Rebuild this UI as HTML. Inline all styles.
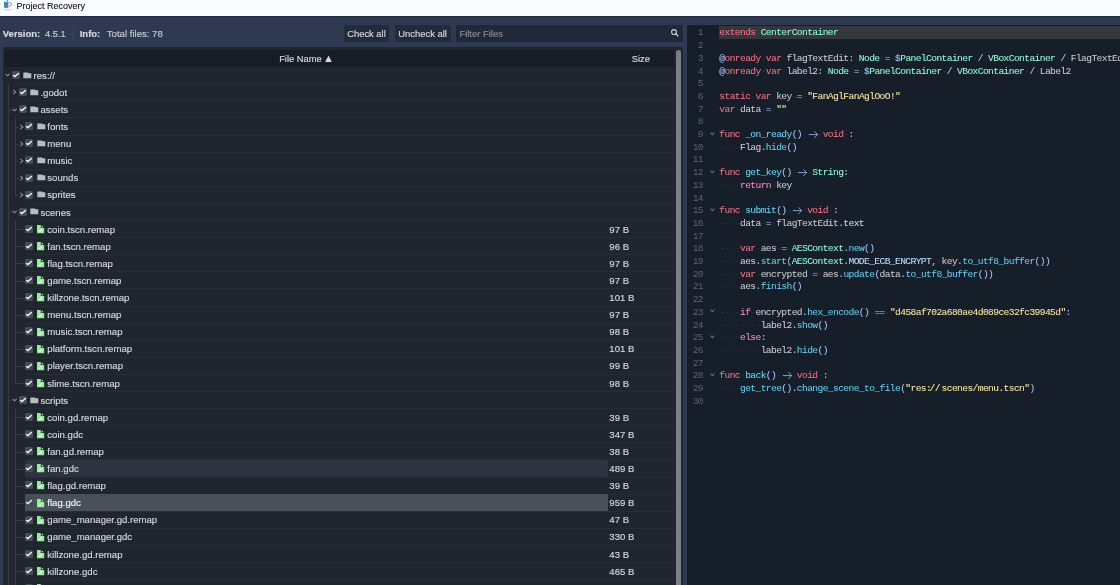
<!DOCTYPE html><html><head><meta charset="utf-8"><style>
*{margin:0;padding:0;box-sizing:border-box}
html,body{width:1120px;height:585px;overflow:hidden;background:#2e3a52;font-family:"Liberation Sans",sans-serif;color:#d3d5d8}
.a{position:absolute}
svg{display:block}
.t{position:absolute;white-space:pre;line-height:0;height:0;-webkit-text-stroke:0.15px}
.cb{position:absolute;width:8px;height:8px;background:#474c54;border-radius:1.5px}
.cb svg{position:absolute;left:0;top:0}
.code{position:absolute;left:687px;top:25px;width:433px;height:560px;background:#161e2a;overflow:hidden}
.ln{position:absolute;white-space:pre;font-family:"Liberation Mono",monospace;font-size:9.6px;letter-spacing:-0.59px;line-height:0;height:0;-webkit-text-stroke:0.04px}
.num{position:absolute;left:0;width:16.0px;text-align:right;font-family:"Liberation Mono",monospace;font-size:9.6px;letter-spacing:-0.59px;line-height:0;height:0;color:#5f636a}
.d{color:#323b4a}
.kw{color:#ff7085}
.cf{color:#ff8ccc}
.ty{color:#8fffdb}
.et{color:#8fffdb}
.fn{color:#5ed4f4}
.fd{color:#62daf8}
.sy{color:#abc9ff}
.st{color:#ffeda1}
.tx{color:#cdcfd2}
.mv{color:#bce0ff}
</style></head><body><div id="root" style="position:absolute;left:0;top:0;width:1120px;height:585px;overflow:hidden;will-change:transform"><div class="a" style="left:0;top:0;width:1120px;height:15px;background:#f9fcff"></div><div class="a" style="left:0;top:15px;width:1120px;height:1px;background:#ffffff"></div><div class="a" style="left:0;top:16px;width:1120px;height:1px;background:#222b40"></div><svg class="a" style="left:2px;top:0px" width="12" height="12" viewBox="0 0 12 12">
<path d="M4.3 0H6.1V1.8H2V7.8H6.1V1.8" fill="#3f8fd6"/>
<path d="M2.1 2H6.2V0.1H6.3V7.8H3.1V7H2.1Z" fill="#3f8fd6"/>
<circle cx="4.4" cy="4.5" r="0.7" fill="#4a5560"/>
<path d="M6.7 2.2C8.8 1.8 10 2.9 10 4.3C10 5.6 9.1 6.2 8 6.3L8 7.2H7.2V5.2C8.4 5.3 9 4.9 9 4.3C9 3.5 8.2 3.1 6.7 3.3Z" fill="#a7aaad"/>
<rect x="2.3" y="9.3" width="7.4" height="1.1" fill="#c9cbcd"/>
</svg><div class="t" style="left:16.4px;top:6.0px;font-size:9px;color:#0c0c1c;-webkit-text-stroke:0.1px">Project Recovery</div><div class="t" style="left:2.80px;top:33.71px;font-size:9.5px;color:#d8dadd;font-weight:700;">Version:</div><div class="t" style="left:45.00px;top:33.78px;font-size:9.3px;color:#c9ccd0;font-weight:400;">4.5.1</div><div class="a" style="left:73px;top:25px;width:1px;height:17px;background:#3a4660"></div><div class="t" style="left:79.70px;top:33.71px;font-size:9.5px;color:#d8dadd;font-weight:700;">Info:</div><div class="t" style="left:106.80px;top:33.67px;font-size:9.6px;color:#c9ccd0;font-weight:400;">Total files: 78</div><div class="a" style="left:344px;top:25px;width:45px;height:17px;background:#232b3a;border-radius:1px"></div><div class="t" style="left:347.20px;top:33.74px;font-size:9.4px;color:#d6d8db;font-weight:400;">Check all</div><div class="a" style="left:395px;top:25px;width:56px;height:17px;background:#232b3a;border-radius:1px"></div><div class="t" style="left:398.20px;top:33.73px;font-size:9.45px;color:#d6d8db;font-weight:400;">Uncheck all</div><div class="a" style="left:456px;top:25px;width:227px;height:17px;background:#212938;border-radius:1px"></div><div class="t" style="left:459.40px;top:33.73px;font-size:9.45px;color:#878c95;font-weight:400;">Filter Files</div><svg class="a" style="left:669px;top:27px" width="12" height="12" viewBox="0 0 12 12">
<circle cx="5" cy="5" r="2.4" fill="none" stroke="#d4d6d9" stroke-width="1.05"/>
<path d="M6.8 6.8L8.9 8.9" stroke="#d4d6d9" stroke-width="1.3" stroke-linecap="round"/>
</svg><div class="a" style="left:3px;top:47px;width:680px;height:540px;background:#20262f;border-radius:2px"></div><div class="a" style="left:5px;top:50px;width:669px;height:17px;background:#171c26"></div><div class="t" style="left:279.20px;top:58.98px;font-size:9.3px;color:#d8dadd;font-weight:400;">File Name</div><svg class="a" style="left:325px;top:55px" width="7" height="7" viewBox="0 0 7 7"><path d="M0.2 7L3.5 0.4L6.8 7Z" fill="#d8dadd"/></svg><div class="t" style="left:631.80px;top:58.98px;font-size:9.3px;color:#d8dadd;font-weight:400;">Size</div><div class="a" style="left:676px;top:50px;width:5px;height:540px;background:#7b7f86;border-radius:2.5px"></div><div class="a" style="left:12.00px;top:83.20px;width:662.00px;height:1px;background:#272c36"></div><div class="cb" style="left:12.10px;top:70.95px"><svg width="8" height="8" viewBox="0 0 8 8"><path d="M1.5 4.5L2.9 5.6L6.4 2.4" fill="none" stroke="#f4f5f6" stroke-width="1.35" stroke-linecap="round"/></svg></div><svg class="a" style="left:5.40px;top:72.30px" width="6" height="6" viewBox="0 0 6 6"><path d="M0.5 1.8L2.6 3.8L4.7 1.8" fill="none" stroke="#8a8e94" stroke-width="1.1"/></svg><div class="a" style="left:23.00px;top:71.60px;width:9px;height:7px"><svg width="9" height="7" viewBox="0 0 9 7"><path d="M0.3 0.4H4.9L5.7 1.3H8.3V6.3H0.3Z" fill="#b9bcbf"/></svg></div><div class="t" style="left:33.60px;top:75.77px;font-size:9.6px;color:#d6d8db;font-weight:400;">res://</div><div class="a" style="left:18.85px;top:100.30px;width:655.15px;height:1px;background:#272c36"></div><div class="cb" style="left:18.70px;top:88.05px"><svg width="8" height="8" viewBox="0 0 8 8"><path d="M1.5 4.5L2.9 5.6L6.4 2.4" fill="none" stroke="#f4f5f6" stroke-width="1.35" stroke-linecap="round"/></svg></div><svg class="a" style="left:11.90px;top:89.40px" width="6" height="6" viewBox="0 0 6 6"><path d="M1.3 0.9L3.7 3L1.3 5.1" fill="none" stroke="#8a8e94" stroke-width="1.1"/></svg><div class="a" style="left:29.75px;top:88.70px;width:9px;height:7px"><svg width="9" height="7" viewBox="0 0 9 7"><path d="M0.3 0.4H4.9L5.7 1.3H8.3V6.3H0.3Z" fill="#b9bcbf"/></svg></div><div class="t" style="left:40.45px;top:92.87px;font-size:9.6px;color:#d6d8db;font-weight:400;">.godot</div><div class="a" style="left:18.85px;top:117.40px;width:655.15px;height:1px;background:#272c36"></div><div class="cb" style="left:18.70px;top:105.15px"><svg width="8" height="8" viewBox="0 0 8 8"><path d="M1.5 4.5L2.9 5.6L6.4 2.4" fill="none" stroke="#f4f5f6" stroke-width="1.35" stroke-linecap="round"/></svg></div><svg class="a" style="left:12.30px;top:106.50px" width="6" height="6" viewBox="0 0 6 6"><path d="M0.5 1.8L2.6 3.8L4.7 1.8" fill="none" stroke="#8a8e94" stroke-width="1.1"/></svg><div class="a" style="left:29.75px;top:105.80px;width:9px;height:7px"><svg width="9" height="7" viewBox="0 0 9 7"><path d="M0.3 0.4H4.9L5.7 1.3H8.3V6.3H0.3Z" fill="#b9bcbf"/></svg></div><div class="t" style="left:40.45px;top:109.97px;font-size:9.6px;color:#d6d8db;font-weight:400;">assets</div><div class="a" style="left:25.70px;top:134.50px;width:648.30px;height:1px;background:#272c36"></div><div class="cb" style="left:25.30px;top:122.25px"><svg width="8" height="8" viewBox="0 0 8 8"><path d="M1.5 4.5L2.9 5.6L6.4 2.4" fill="none" stroke="#f4f5f6" stroke-width="1.35" stroke-linecap="round"/></svg></div><svg class="a" style="left:18.60px;top:123.60px" width="6" height="6" viewBox="0 0 6 6"><path d="M1.3 0.9L3.7 3L1.3 5.1" fill="none" stroke="#8a8e94" stroke-width="1.1"/></svg><div class="a" style="left:36.50px;top:122.90px;width:9px;height:7px"><svg width="9" height="7" viewBox="0 0 9 7"><path d="M0.3 0.4H4.9L5.7 1.3H8.3V6.3H0.3Z" fill="#b9bcbf"/></svg></div><div class="t" style="left:47.30px;top:127.07px;font-size:9.6px;color:#d6d8db;font-weight:400;">fonts</div><div class="a" style="left:25.70px;top:151.60px;width:648.30px;height:1px;background:#272c36"></div><div class="cb" style="left:25.30px;top:139.35px"><svg width="8" height="8" viewBox="0 0 8 8"><path d="M1.5 4.5L2.9 5.6L6.4 2.4" fill="none" stroke="#f4f5f6" stroke-width="1.35" stroke-linecap="round"/></svg></div><svg class="a" style="left:18.60px;top:140.70px" width="6" height="6" viewBox="0 0 6 6"><path d="M1.3 0.9L3.7 3L1.3 5.1" fill="none" stroke="#8a8e94" stroke-width="1.1"/></svg><div class="a" style="left:36.50px;top:140.00px;width:9px;height:7px"><svg width="9" height="7" viewBox="0 0 9 7"><path d="M0.3 0.4H4.9L5.7 1.3H8.3V6.3H0.3Z" fill="#b9bcbf"/></svg></div><div class="t" style="left:47.30px;top:144.17px;font-size:9.6px;color:#d6d8db;font-weight:400;">menu</div><div class="a" style="left:25.70px;top:168.70px;width:648.30px;height:1px;background:#272c36"></div><div class="cb" style="left:25.30px;top:156.45px"><svg width="8" height="8" viewBox="0 0 8 8"><path d="M1.5 4.5L2.9 5.6L6.4 2.4" fill="none" stroke="#f4f5f6" stroke-width="1.35" stroke-linecap="round"/></svg></div><svg class="a" style="left:18.60px;top:157.80px" width="6" height="6" viewBox="0 0 6 6"><path d="M1.3 0.9L3.7 3L1.3 5.1" fill="none" stroke="#8a8e94" stroke-width="1.1"/></svg><div class="a" style="left:36.50px;top:157.10px;width:9px;height:7px"><svg width="9" height="7" viewBox="0 0 9 7"><path d="M0.3 0.4H4.9L5.7 1.3H8.3V6.3H0.3Z" fill="#b9bcbf"/></svg></div><div class="t" style="left:47.30px;top:161.27px;font-size:9.6px;color:#d6d8db;font-weight:400;">music</div><div class="a" style="left:25.70px;top:185.80px;width:648.30px;height:1px;background:#272c36"></div><div class="cb" style="left:25.30px;top:173.55px"><svg width="8" height="8" viewBox="0 0 8 8"><path d="M1.5 4.5L2.9 5.6L6.4 2.4" fill="none" stroke="#f4f5f6" stroke-width="1.35" stroke-linecap="round"/></svg></div><svg class="a" style="left:18.60px;top:174.90px" width="6" height="6" viewBox="0 0 6 6"><path d="M1.3 0.9L3.7 3L1.3 5.1" fill="none" stroke="#8a8e94" stroke-width="1.1"/></svg><div class="a" style="left:36.50px;top:174.20px;width:9px;height:7px"><svg width="9" height="7" viewBox="0 0 9 7"><path d="M0.3 0.4H4.9L5.7 1.3H8.3V6.3H0.3Z" fill="#b9bcbf"/></svg></div><div class="t" style="left:47.30px;top:178.37px;font-size:9.6px;color:#d6d8db;font-weight:400;">sounds</div><div class="a" style="left:25.70px;top:202.90px;width:648.30px;height:1px;background:#272c36"></div><div class="cb" style="left:25.30px;top:190.65px"><svg width="8" height="8" viewBox="0 0 8 8"><path d="M1.5 4.5L2.9 5.6L6.4 2.4" fill="none" stroke="#f4f5f6" stroke-width="1.35" stroke-linecap="round"/></svg></div><svg class="a" style="left:18.60px;top:192.00px" width="6" height="6" viewBox="0 0 6 6"><path d="M1.3 0.9L3.7 3L1.3 5.1" fill="none" stroke="#8a8e94" stroke-width="1.1"/></svg><div class="a" style="left:36.50px;top:191.30px;width:9px;height:7px"><svg width="9" height="7" viewBox="0 0 9 7"><path d="M0.3 0.4H4.9L5.7 1.3H8.3V6.3H0.3Z" fill="#b9bcbf"/></svg></div><div class="t" style="left:47.30px;top:195.47px;font-size:9.6px;color:#d6d8db;font-weight:400;">sprites</div><div class="a" style="left:18.85px;top:220.00px;width:655.15px;height:1px;background:#272c36"></div><div class="cb" style="left:18.70px;top:207.75px"><svg width="8" height="8" viewBox="0 0 8 8"><path d="M1.5 4.5L2.9 5.6L6.4 2.4" fill="none" stroke="#f4f5f6" stroke-width="1.35" stroke-linecap="round"/></svg></div><svg class="a" style="left:12.30px;top:209.10px" width="6" height="6" viewBox="0 0 6 6"><path d="M0.5 1.8L2.6 3.8L4.7 1.8" fill="none" stroke="#8a8e94" stroke-width="1.1"/></svg><div class="a" style="left:29.75px;top:208.40px;width:9px;height:7px"><svg width="9" height="7" viewBox="0 0 9 7"><path d="M0.3 0.4H4.9L5.7 1.3H8.3V6.3H0.3Z" fill="#b9bcbf"/></svg></div><div class="t" style="left:40.45px;top:212.57px;font-size:9.6px;color:#d6d8db;font-weight:400;">scenes</div><div class="a" style="left:25.70px;top:237.10px;width:648.30px;height:1px;background:#272c36"></div><div class="cb" style="left:25.30px;top:224.85px"><svg width="8" height="8" viewBox="0 0 8 8"><path d="M1.5 4.5L2.9 5.6L6.4 2.4" fill="none" stroke="#f4f5f6" stroke-width="1.35" stroke-linecap="round"/></svg></div><div class="a" style="left:36.90px;top:224.90px;width:8px;height:9px"><svg width="8" height="9" viewBox="0 0 8 9"><path d="M0 0.1H3.8V3.0H7.2V8.3H0Z" fill="#96ec9b"/><rect x="4.6" y="0.9" width="1.5" height="1.5" fill="#8fe394"/><path d="M1.7 5.9L2.8 6.6L5.0 4.2" fill="none" stroke="#f2fbf2" stroke-width="1.15"/></svg></div><div class="t" style="left:47.30px;top:229.67px;font-size:9.6px;color:#d6d8db;font-weight:400;">coin.tscn.remap</div><div class="t" style="left:609.30px;top:229.67px;font-size:9.6px;color:#d6d8db;font-weight:400;">97 B</div><div class="a" style="left:25.70px;top:254.20px;width:648.30px;height:1px;background:#272c36"></div><div class="cb" style="left:25.30px;top:241.95px"><svg width="8" height="8" viewBox="0 0 8 8"><path d="M1.5 4.5L2.9 5.6L6.4 2.4" fill="none" stroke="#f4f5f6" stroke-width="1.35" stroke-linecap="round"/></svg></div><div class="a" style="left:36.90px;top:242.00px;width:8px;height:9px"><svg width="8" height="9" viewBox="0 0 8 9"><path d="M0 0.1H3.8V3.0H7.2V8.3H0Z" fill="#96ec9b"/><rect x="4.6" y="0.9" width="1.5" height="1.5" fill="#8fe394"/><path d="M1.7 5.9L2.8 6.6L5.0 4.2" fill="none" stroke="#f2fbf2" stroke-width="1.15"/></svg></div><div class="t" style="left:47.30px;top:246.77px;font-size:9.6px;color:#d6d8db;font-weight:400;">fan.tscn.remap</div><div class="t" style="left:609.30px;top:246.77px;font-size:9.6px;color:#d6d8db;font-weight:400;">96 B</div><div class="a" style="left:25.70px;top:271.30px;width:648.30px;height:1px;background:#272c36"></div><div class="cb" style="left:25.30px;top:259.05px"><svg width="8" height="8" viewBox="0 0 8 8"><path d="M1.5 4.5L2.9 5.6L6.4 2.4" fill="none" stroke="#f4f5f6" stroke-width="1.35" stroke-linecap="round"/></svg></div><div class="a" style="left:36.90px;top:259.10px;width:8px;height:9px"><svg width="8" height="9" viewBox="0 0 8 9"><path d="M0 0.1H3.8V3.0H7.2V8.3H0Z" fill="#96ec9b"/><rect x="4.6" y="0.9" width="1.5" height="1.5" fill="#8fe394"/><path d="M1.7 5.9L2.8 6.6L5.0 4.2" fill="none" stroke="#f2fbf2" stroke-width="1.15"/></svg></div><div class="t" style="left:47.30px;top:263.87px;font-size:9.6px;color:#d6d8db;font-weight:400;">flag.tscn.remap</div><div class="t" style="left:609.30px;top:263.87px;font-size:9.6px;color:#d6d8db;font-weight:400;">97 B</div><div class="a" style="left:25.70px;top:288.40px;width:648.30px;height:1px;background:#272c36"></div><div class="cb" style="left:25.30px;top:276.15px"><svg width="8" height="8" viewBox="0 0 8 8"><path d="M1.5 4.5L2.9 5.6L6.4 2.4" fill="none" stroke="#f4f5f6" stroke-width="1.35" stroke-linecap="round"/></svg></div><div class="a" style="left:36.90px;top:276.20px;width:8px;height:9px"><svg width="8" height="9" viewBox="0 0 8 9"><path d="M0 0.1H3.8V3.0H7.2V8.3H0Z" fill="#96ec9b"/><rect x="4.6" y="0.9" width="1.5" height="1.5" fill="#8fe394"/><path d="M1.7 5.9L2.8 6.6L5.0 4.2" fill="none" stroke="#f2fbf2" stroke-width="1.15"/></svg></div><div class="t" style="left:47.30px;top:280.97px;font-size:9.6px;color:#d6d8db;font-weight:400;">game.tscn.remap</div><div class="t" style="left:609.30px;top:280.97px;font-size:9.6px;color:#d6d8db;font-weight:400;">97 B</div><div class="a" style="left:25.70px;top:305.50px;width:648.30px;height:1px;background:#272c36"></div><div class="cb" style="left:25.30px;top:293.25px"><svg width="8" height="8" viewBox="0 0 8 8"><path d="M1.5 4.5L2.9 5.6L6.4 2.4" fill="none" stroke="#f4f5f6" stroke-width="1.35" stroke-linecap="round"/></svg></div><div class="a" style="left:36.90px;top:293.30px;width:8px;height:9px"><svg width="8" height="9" viewBox="0 0 8 9"><path d="M0 0.1H3.8V3.0H7.2V8.3H0Z" fill="#96ec9b"/><rect x="4.6" y="0.9" width="1.5" height="1.5" fill="#8fe394"/><path d="M1.7 5.9L2.8 6.6L5.0 4.2" fill="none" stroke="#f2fbf2" stroke-width="1.15"/></svg></div><div class="t" style="left:47.30px;top:298.07px;font-size:9.6px;color:#d6d8db;font-weight:400;">killzone.tscn.remap</div><div class="t" style="left:609.30px;top:298.07px;font-size:9.6px;color:#d6d8db;font-weight:400;">101 B</div><div class="a" style="left:25.70px;top:322.60px;width:648.30px;height:1px;background:#272c36"></div><div class="cb" style="left:25.30px;top:310.35px"><svg width="8" height="8" viewBox="0 0 8 8"><path d="M1.5 4.5L2.9 5.6L6.4 2.4" fill="none" stroke="#f4f5f6" stroke-width="1.35" stroke-linecap="round"/></svg></div><div class="a" style="left:36.90px;top:310.40px;width:8px;height:9px"><svg width="8" height="9" viewBox="0 0 8 9"><path d="M0 0.1H3.8V3.0H7.2V8.3H0Z" fill="#96ec9b"/><rect x="4.6" y="0.9" width="1.5" height="1.5" fill="#8fe394"/><path d="M1.7 5.9L2.8 6.6L5.0 4.2" fill="none" stroke="#f2fbf2" stroke-width="1.15"/></svg></div><div class="t" style="left:47.30px;top:315.17px;font-size:9.6px;color:#d6d8db;font-weight:400;">menu.tscn.remap</div><div class="t" style="left:609.30px;top:315.17px;font-size:9.6px;color:#d6d8db;font-weight:400;">97 B</div><div class="a" style="left:25.70px;top:339.70px;width:648.30px;height:1px;background:#272c36"></div><div class="cb" style="left:25.30px;top:327.45px"><svg width="8" height="8" viewBox="0 0 8 8"><path d="M1.5 4.5L2.9 5.6L6.4 2.4" fill="none" stroke="#f4f5f6" stroke-width="1.35" stroke-linecap="round"/></svg></div><div class="a" style="left:36.90px;top:327.50px;width:8px;height:9px"><svg width="8" height="9" viewBox="0 0 8 9"><path d="M0 0.1H3.8V3.0H7.2V8.3H0Z" fill="#96ec9b"/><rect x="4.6" y="0.9" width="1.5" height="1.5" fill="#8fe394"/><path d="M1.7 5.9L2.8 6.6L5.0 4.2" fill="none" stroke="#f2fbf2" stroke-width="1.15"/></svg></div><div class="t" style="left:47.30px;top:332.27px;font-size:9.6px;color:#d6d8db;font-weight:400;">music.tscn.remap</div><div class="t" style="left:609.30px;top:332.27px;font-size:9.6px;color:#d6d8db;font-weight:400;">98 B</div><div class="a" style="left:25.70px;top:356.80px;width:648.30px;height:1px;background:#272c36"></div><div class="cb" style="left:25.30px;top:344.55px"><svg width="8" height="8" viewBox="0 0 8 8"><path d="M1.5 4.5L2.9 5.6L6.4 2.4" fill="none" stroke="#f4f5f6" stroke-width="1.35" stroke-linecap="round"/></svg></div><div class="a" style="left:36.90px;top:344.60px;width:8px;height:9px"><svg width="8" height="9" viewBox="0 0 8 9"><path d="M0 0.1H3.8V3.0H7.2V8.3H0Z" fill="#96ec9b"/><rect x="4.6" y="0.9" width="1.5" height="1.5" fill="#8fe394"/><path d="M1.7 5.9L2.8 6.6L5.0 4.2" fill="none" stroke="#f2fbf2" stroke-width="1.15"/></svg></div><div class="t" style="left:47.30px;top:349.37px;font-size:9.6px;color:#d6d8db;font-weight:400;">platform.tscn.remap</div><div class="t" style="left:609.30px;top:349.37px;font-size:9.6px;color:#d6d8db;font-weight:400;">101 B</div><div class="a" style="left:25.70px;top:373.90px;width:648.30px;height:1px;background:#272c36"></div><div class="cb" style="left:25.30px;top:361.65px"><svg width="8" height="8" viewBox="0 0 8 8"><path d="M1.5 4.5L2.9 5.6L6.4 2.4" fill="none" stroke="#f4f5f6" stroke-width="1.35" stroke-linecap="round"/></svg></div><div class="a" style="left:36.90px;top:361.70px;width:8px;height:9px"><svg width="8" height="9" viewBox="0 0 8 9"><path d="M0 0.1H3.8V3.0H7.2V8.3H0Z" fill="#96ec9b"/><rect x="4.6" y="0.9" width="1.5" height="1.5" fill="#8fe394"/><path d="M1.7 5.9L2.8 6.6L5.0 4.2" fill="none" stroke="#f2fbf2" stroke-width="1.15"/></svg></div><div class="t" style="left:47.30px;top:366.47px;font-size:9.6px;color:#d6d8db;font-weight:400;">player.tscn.remap</div><div class="t" style="left:609.30px;top:366.47px;font-size:9.6px;color:#d6d8db;font-weight:400;">99 B</div><div class="a" style="left:25.70px;top:391.00px;width:648.30px;height:1px;background:#272c36"></div><div class="cb" style="left:25.30px;top:378.75px"><svg width="8" height="8" viewBox="0 0 8 8"><path d="M1.5 4.5L2.9 5.6L6.4 2.4" fill="none" stroke="#f4f5f6" stroke-width="1.35" stroke-linecap="round"/></svg></div><div class="a" style="left:36.90px;top:378.80px;width:8px;height:9px"><svg width="8" height="9" viewBox="0 0 8 9"><path d="M0 0.1H3.8V3.0H7.2V8.3H0Z" fill="#96ec9b"/><rect x="4.6" y="0.9" width="1.5" height="1.5" fill="#8fe394"/><path d="M1.7 5.9L2.8 6.6L5.0 4.2" fill="none" stroke="#f2fbf2" stroke-width="1.15"/></svg></div><div class="t" style="left:47.30px;top:383.57px;font-size:9.6px;color:#d6d8db;font-weight:400;">slime.tscn.remap</div><div class="t" style="left:609.30px;top:383.57px;font-size:9.6px;color:#d6d8db;font-weight:400;">98 B</div><div class="a" style="left:18.85px;top:408.10px;width:655.15px;height:1px;background:#272c36"></div><div class="cb" style="left:18.70px;top:395.85px"><svg width="8" height="8" viewBox="0 0 8 8"><path d="M1.5 4.5L2.9 5.6L6.4 2.4" fill="none" stroke="#f4f5f6" stroke-width="1.35" stroke-linecap="round"/></svg></div><svg class="a" style="left:12.30px;top:397.20px" width="6" height="6" viewBox="0 0 6 6"><path d="M0.5 1.8L2.6 3.8L4.7 1.8" fill="none" stroke="#8a8e94" stroke-width="1.1"/></svg><div class="a" style="left:29.75px;top:396.50px;width:9px;height:7px"><svg width="9" height="7" viewBox="0 0 9 7"><path d="M0.3 0.4H4.9L5.7 1.3H8.3V6.3H0.3Z" fill="#b9bcbf"/></svg></div><div class="t" style="left:40.45px;top:400.67px;font-size:9.6px;color:#d6d8db;font-weight:400;">scripts</div><div class="a" style="left:25.70px;top:425.20px;width:648.30px;height:1px;background:#272c36"></div><div class="cb" style="left:25.30px;top:412.95px"><svg width="8" height="8" viewBox="0 0 8 8"><path d="M1.5 4.5L2.9 5.6L6.4 2.4" fill="none" stroke="#f4f5f6" stroke-width="1.35" stroke-linecap="round"/></svg></div><div class="a" style="left:36.90px;top:413.00px;width:8px;height:9px"><svg width="8" height="9" viewBox="0 0 8 9"><path d="M0 0.1H3.8V3.0H7.2V8.3H0Z" fill="#96ec9b"/><rect x="4.6" y="0.9" width="1.5" height="1.5" fill="#8fe394"/><path d="M1.7 5.9L2.8 6.6L5.0 4.2" fill="none" stroke="#f2fbf2" stroke-width="1.15"/></svg></div><div class="t" style="left:47.30px;top:417.77px;font-size:9.6px;color:#d6d8db;font-weight:400;">coin.gd.remap</div><div class="t" style="left:609.30px;top:417.77px;font-size:9.6px;color:#d6d8db;font-weight:400;">39 B</div><div class="a" style="left:25.70px;top:442.30px;width:648.30px;height:1px;background:#272c36"></div><div class="cb" style="left:25.30px;top:430.05px"><svg width="8" height="8" viewBox="0 0 8 8"><path d="M1.5 4.5L2.9 5.6L6.4 2.4" fill="none" stroke="#f4f5f6" stroke-width="1.35" stroke-linecap="round"/></svg></div><div class="a" style="left:36.90px;top:430.10px;width:8px;height:9px"><svg width="8" height="9" viewBox="0 0 8 9"><path d="M0 0.1H3.8V3.0H7.2V8.3H0Z" fill="#96ec9b"/><rect x="4.6" y="0.9" width="1.5" height="1.5" fill="#8fe394"/><path d="M1.7 5.9L2.8 6.6L5.0 4.2" fill="none" stroke="#f2fbf2" stroke-width="1.15"/></svg></div><div class="t" style="left:47.30px;top:434.87px;font-size:9.6px;color:#d6d8db;font-weight:400;">coin.gdc</div><div class="t" style="left:609.30px;top:434.87px;font-size:9.6px;color:#d6d8db;font-weight:400;">347 B</div><div class="a" style="left:25.70px;top:459.40px;width:648.30px;height:1px;background:#272c36"></div><div class="cb" style="left:25.30px;top:447.15px"><svg width="8" height="8" viewBox="0 0 8 8"><path d="M1.5 4.5L2.9 5.6L6.4 2.4" fill="none" stroke="#f4f5f6" stroke-width="1.35" stroke-linecap="round"/></svg></div><div class="a" style="left:36.90px;top:447.20px;width:8px;height:9px"><svg width="8" height="9" viewBox="0 0 8 9"><path d="M0 0.1H3.8V3.0H7.2V8.3H0Z" fill="#96ec9b"/><rect x="4.6" y="0.9" width="1.5" height="1.5" fill="#8fe394"/><path d="M1.7 5.9L2.8 6.6L5.0 4.2" fill="none" stroke="#f2fbf2" stroke-width="1.15"/></svg></div><div class="t" style="left:47.30px;top:451.97px;font-size:9.6px;color:#d6d8db;font-weight:400;">fan.gd.remap</div><div class="t" style="left:609.30px;top:451.97px;font-size:9.6px;color:#d6d8db;font-weight:400;">38 B</div><div class="a" style="left:24.6px;top:460.40px;width:583px;height:17px;background:#2e343f;border-radius:2px"></div><div class="a" style="left:25.70px;top:476.50px;width:648.30px;height:1px;background:#272c36"></div><div class="cb" style="left:25.30px;top:464.25px"><svg width="8" height="8" viewBox="0 0 8 8"><path d="M1.5 4.5L2.9 5.6L6.4 2.4" fill="none" stroke="#f4f5f6" stroke-width="1.35" stroke-linecap="round"/></svg></div><div class="a" style="left:36.90px;top:464.30px;width:8px;height:9px"><svg width="8" height="9" viewBox="0 0 8 9"><path d="M0 0.1H3.8V3.0H7.2V8.3H0Z" fill="#96ec9b"/><rect x="4.6" y="0.9" width="1.5" height="1.5" fill="#8fe394"/><path d="M1.7 5.9L2.8 6.6L5.0 4.2" fill="none" stroke="#f2fbf2" stroke-width="1.15"/></svg></div><div class="t" style="left:47.30px;top:469.07px;font-size:9.6px;color:#d6d8db;font-weight:400;">fan.gdc</div><div class="t" style="left:609.30px;top:469.07px;font-size:9.6px;color:#d6d8db;font-weight:400;">489 B</div><div class="a" style="left:25.70px;top:493.60px;width:648.30px;height:1px;background:#272c36"></div><div class="cb" style="left:25.30px;top:481.35px"><svg width="8" height="8" viewBox="0 0 8 8"><path d="M1.5 4.5L2.9 5.6L6.4 2.4" fill="none" stroke="#f4f5f6" stroke-width="1.35" stroke-linecap="round"/></svg></div><div class="a" style="left:36.90px;top:481.40px;width:8px;height:9px"><svg width="8" height="9" viewBox="0 0 8 9"><path d="M0 0.1H3.8V3.0H7.2V8.3H0Z" fill="#96ec9b"/><rect x="4.6" y="0.9" width="1.5" height="1.5" fill="#8fe394"/><path d="M1.7 5.9L2.8 6.6L5.0 4.2" fill="none" stroke="#f2fbf2" stroke-width="1.15"/></svg></div><div class="t" style="left:47.30px;top:486.17px;font-size:9.6px;color:#d6d8db;font-weight:400;">flag.gd.remap</div><div class="t" style="left:609.30px;top:486.17px;font-size:9.6px;color:#d6d8db;font-weight:400;">39 B</div><div class="a" style="left:24.6px;top:494.10px;width:583.3px;height:17.7px;background:#4a505a;border-radius:1px"></div><div class="a" style="left:25.70px;top:510.70px;width:648.30px;height:1px;background:#272c36"></div><div class="cb" style="left:25.30px;top:498.45px"><svg width="8" height="8" viewBox="0 0 8 8"><path d="M1.5 4.5L2.9 5.6L6.4 2.4" fill="none" stroke="#f4f5f6" stroke-width="1.35" stroke-linecap="round"/></svg></div><div class="a" style="left:36.90px;top:498.50px;width:8px;height:9px"><svg width="8" height="9" viewBox="0 0 8 9"><path d="M0 0.1H3.8V3.0H7.2V8.3H0Z" fill="#96ec9b"/><rect x="4.6" y="0.9" width="1.5" height="1.5" fill="#8fe394"/><path d="M1.7 5.9L2.8 6.6L5.0 4.2" fill="none" stroke="#f2fbf2" stroke-width="1.15"/></svg></div><div class="t" style="left:47.30px;top:503.27px;font-size:9.6px;color:#f4f5f6;font-weight:400;">flag.gdc</div><div class="t" style="left:609.30px;top:503.27px;font-size:9.6px;color:#d6d8db;font-weight:400;">959 B</div><div class="a" style="left:25.70px;top:527.80px;width:648.30px;height:1px;background:#272c36"></div><div class="cb" style="left:25.30px;top:515.55px"><svg width="8" height="8" viewBox="0 0 8 8"><path d="M1.5 4.5L2.9 5.6L6.4 2.4" fill="none" stroke="#f4f5f6" stroke-width="1.35" stroke-linecap="round"/></svg></div><div class="a" style="left:36.90px;top:515.60px;width:8px;height:9px"><svg width="8" height="9" viewBox="0 0 8 9"><path d="M0 0.1H3.8V3.0H7.2V8.3H0Z" fill="#96ec9b"/><rect x="4.6" y="0.9" width="1.5" height="1.5" fill="#8fe394"/><path d="M1.7 5.9L2.8 6.6L5.0 4.2" fill="none" stroke="#f2fbf2" stroke-width="1.15"/></svg></div><div class="t" style="left:47.30px;top:520.37px;font-size:9.6px;color:#d6d8db;font-weight:400;">game_manager.gd.remap</div><div class="t" style="left:609.30px;top:520.37px;font-size:9.6px;color:#d6d8db;font-weight:400;">47 B</div><div class="a" style="left:25.70px;top:544.90px;width:648.30px;height:1px;background:#272c36"></div><div class="cb" style="left:25.30px;top:532.65px"><svg width="8" height="8" viewBox="0 0 8 8"><path d="M1.5 4.5L2.9 5.6L6.4 2.4" fill="none" stroke="#f4f5f6" stroke-width="1.35" stroke-linecap="round"/></svg></div><div class="a" style="left:36.90px;top:532.70px;width:8px;height:9px"><svg width="8" height="9" viewBox="0 0 8 9"><path d="M0 0.1H3.8V3.0H7.2V8.3H0Z" fill="#96ec9b"/><rect x="4.6" y="0.9" width="1.5" height="1.5" fill="#8fe394"/><path d="M1.7 5.9L2.8 6.6L5.0 4.2" fill="none" stroke="#f2fbf2" stroke-width="1.15"/></svg></div><div class="t" style="left:47.30px;top:537.47px;font-size:9.6px;color:#d6d8db;font-weight:400;">game_manager.gdc</div><div class="t" style="left:609.30px;top:537.47px;font-size:9.6px;color:#d6d8db;font-weight:400;">330 B</div><div class="a" style="left:25.70px;top:562.00px;width:648.30px;height:1px;background:#272c36"></div><div class="cb" style="left:25.30px;top:549.75px"><svg width="8" height="8" viewBox="0 0 8 8"><path d="M1.5 4.5L2.9 5.6L6.4 2.4" fill="none" stroke="#f4f5f6" stroke-width="1.35" stroke-linecap="round"/></svg></div><div class="a" style="left:36.90px;top:549.80px;width:8px;height:9px"><svg width="8" height="9" viewBox="0 0 8 9"><path d="M0 0.1H3.8V3.0H7.2V8.3H0Z" fill="#96ec9b"/><rect x="4.6" y="0.9" width="1.5" height="1.5" fill="#8fe394"/><path d="M1.7 5.9L2.8 6.6L5.0 4.2" fill="none" stroke="#f2fbf2" stroke-width="1.15"/></svg></div><div class="t" style="left:47.30px;top:554.57px;font-size:9.6px;color:#d6d8db;font-weight:400;">killzone.gd.remap</div><div class="t" style="left:609.30px;top:554.57px;font-size:9.6px;color:#d6d8db;font-weight:400;">43 B</div><div class="a" style="left:25.70px;top:579.10px;width:648.30px;height:1px;background:#272c36"></div><div class="cb" style="left:25.30px;top:566.85px"><svg width="8" height="8" viewBox="0 0 8 8"><path d="M1.5 4.5L2.9 5.6L6.4 2.4" fill="none" stroke="#f4f5f6" stroke-width="1.35" stroke-linecap="round"/></svg></div><div class="a" style="left:36.90px;top:566.90px;width:8px;height:9px"><svg width="8" height="9" viewBox="0 0 8 9"><path d="M0 0.1H3.8V3.0H7.2V8.3H0Z" fill="#96ec9b"/><rect x="4.6" y="0.9" width="1.5" height="1.5" fill="#8fe394"/><path d="M1.7 5.9L2.8 6.6L5.0 4.2" fill="none" stroke="#f2fbf2" stroke-width="1.15"/></svg></div><div class="t" style="left:47.30px;top:571.67px;font-size:9.6px;color:#d6d8db;font-weight:400;">killzone.gdc</div><div class="t" style="left:609.30px;top:571.67px;font-size:9.6px;color:#d6d8db;font-weight:400;">465 B</div><div class="a" style="left:25.70px;top:596.20px;width:648.30px;height:1px;background:#272c36"></div><div class="cb" style="left:25.30px;top:583.95px"><svg width="8" height="8" viewBox="0 0 8 8"><path d="M1.5 4.5L2.9 5.6L6.4 2.4" fill="none" stroke="#f4f5f6" stroke-width="1.35" stroke-linecap="round"/></svg></div><div class="a" style="left:36.90px;top:584.00px;width:8px;height:9px"><svg width="8" height="9" viewBox="0 0 8 9"><path d="M0 0.1H3.8V3.0H7.2V8.3H0Z" fill="#96ec9b"/><rect x="4.6" y="0.9" width="1.5" height="1.5" fill="#8fe394"/><path d="M1.7 5.9L2.8 6.6L5.0 4.2" fill="none" stroke="#f2fbf2" stroke-width="1.15"/></svg></div><div class="t" style="left:47.30px;top:588.77px;font-size:9.6px;color:#d6d8db;font-weight:400;">main.gd.remap</div><div class="t" style="left:609.30px;top:588.77px;font-size:9.6px;color:#d6d8db;font-weight:400;">39 B</div><div class="a" style="left:8px;top:83.60px;width:1px;height:516.40px;background:#3b3b3a"></div><div class="a" style="left:15px;top:118.30px;width:1px;height:77.20px;background:#3b3b3a"></div><div class="a" style="left:15px;top:220.90px;width:1px;height:162.70px;background:#3b3b3a"></div><div class="a" style="left:15px;top:409.00px;width:1px;height:191.00px;background:#3b3b3a"></div><div class="a" style="left:8px;top:92.40px;width:4.00px;height:1px;background:#3b3b3a"></div><div class="a" style="left:8px;top:109.50px;width:4.00px;height:1px;background:#3b3b3a"></div><div class="a" style="left:15px;top:126.60px;width:4.00px;height:1px;background:#3b3b3a"></div><div class="a" style="left:15px;top:143.70px;width:4.00px;height:1px;background:#3b3b3a"></div><div class="a" style="left:15px;top:160.80px;width:4.00px;height:1px;background:#3b3b3a"></div><div class="a" style="left:15px;top:177.90px;width:4.00px;height:1px;background:#3b3b3a"></div><div class="a" style="left:15px;top:195.00px;width:4.00px;height:1px;background:#3b3b3a"></div><div class="a" style="left:8px;top:212.10px;width:4.00px;height:1px;background:#3b3b3a"></div><div class="a" style="left:15px;top:229.20px;width:10.30px;height:1px;background:#3b3b3a"></div><div class="a" style="left:15px;top:246.30px;width:10.30px;height:1px;background:#3b3b3a"></div><div class="a" style="left:15px;top:263.40px;width:10.30px;height:1px;background:#3b3b3a"></div><div class="a" style="left:15px;top:280.50px;width:10.30px;height:1px;background:#3b3b3a"></div><div class="a" style="left:15px;top:297.60px;width:10.30px;height:1px;background:#3b3b3a"></div><div class="a" style="left:15px;top:314.70px;width:10.30px;height:1px;background:#3b3b3a"></div><div class="a" style="left:15px;top:331.80px;width:10.30px;height:1px;background:#3b3b3a"></div><div class="a" style="left:15px;top:348.90px;width:10.30px;height:1px;background:#3b3b3a"></div><div class="a" style="left:15px;top:366.00px;width:10.30px;height:1px;background:#3b3b3a"></div><div class="a" style="left:15px;top:383.10px;width:10.30px;height:1px;background:#3b3b3a"></div><div class="a" style="left:8px;top:400.20px;width:4.00px;height:1px;background:#3b3b3a"></div><div class="a" style="left:15px;top:417.30px;width:10.30px;height:1px;background:#3b3b3a"></div><div class="a" style="left:15px;top:434.40px;width:10.30px;height:1px;background:#3b3b3a"></div><div class="a" style="left:15px;top:451.50px;width:10.30px;height:1px;background:#3b3b3a"></div><div class="a" style="left:15px;top:468.60px;width:10.30px;height:1px;background:#3b3b3a"></div><div class="a" style="left:15px;top:485.70px;width:10.30px;height:1px;background:#3b3b3a"></div><div class="a" style="left:15px;top:502.80px;width:10.30px;height:1px;background:#3b3b3a"></div><div class="a" style="left:15px;top:519.90px;width:10.30px;height:1px;background:#3b3b3a"></div><div class="a" style="left:15px;top:537.00px;width:10.30px;height:1px;background:#3b3b3a"></div><div class="a" style="left:15px;top:554.10px;width:10.30px;height:1px;background:#3b3b3a"></div><div class="a" style="left:15px;top:571.20px;width:10.30px;height:1px;background:#3b3b3a"></div><div class="a" style="left:15px;top:588.30px;width:10.30px;height:1px;background:#3b3b3a"></div><div class="code"><div class="a" style="left:32px;top:0.9px;width:420px;height:12.8px;background:#35373b"></div><div class="num" style="top:8.44px">1</div><div class="ln" style="left:32.3px;top:8.44px"><span class="kw">extends</span><span class="d">·</span><span class="ty">CenterContainer</span></div><div class="num" style="top:21.14px">2</div><div class="num" style="top:33.84px">3</div><div class="ln" style="left:32.3px;top:33.84px"><span class="sy">@</span><span class="kw">onready</span><span class="d">·</span><span class="kw">var</span><span class="d">·</span><span class="tx">flagTextEdit</span><span class="sy">:</span><span class="d">·</span><span class="ty">Node</span><span class="d">·</span><span class="sy">=</span><span class="d">·</span><span class="sy">$</span><span class="ty">PanelContainer</span><span class="d">·</span><span class="sy">/</span><span class="d">·</span><span class="ty">VBoxContainer</span><span class="d">·</span><span class="sy">/</span><span class="d">·</span><span class="tx">FlagTextEdit</span></div><div class="num" style="top:46.54px">4</div><div class="ln" style="left:32.3px;top:46.54px"><span class="sy">@</span><span class="kw">onready</span><span class="d">·</span><span class="kw">var</span><span class="d">·</span><span class="tx">label2</span><span class="sy">:</span><span class="d">·</span><span class="ty">Node</span><span class="d">·</span><span class="sy">=</span><span class="d">·</span><span class="sy">$</span><span class="ty">PanelContainer</span><span class="d">·</span><span class="sy">/</span><span class="d">·</span><span class="ty">VBoxContainer</span><span class="d">·</span><span class="sy">/</span><span class="d">·</span><span class="tx">Label2</span></div><div class="num" style="top:59.24px">5</div><div class="num" style="top:71.94px">6</div><div class="ln" style="left:32.3px;top:71.94px"><span class="kw">static</span><span class="d">·</span><span class="kw">var</span><span class="d">·</span><span class="tx">key</span><span class="d">·</span><span class="sy">=</span><span class="d">·</span><span class="st">&quot;FanAglFanAglOoO!&quot;</span></div><div class="num" style="top:84.64px">7</div><div class="ln" style="left:32.3px;top:84.64px"><span class="kw">var</span><span class="d">·</span><span class="tx">data</span><span class="d">·</span><span class="sy">=</span><span class="d">·</span><span class="st">&quot;&quot;</span></div><div class="num" style="top:97.34px">8</div><div class="num" style="top:110.04px">9</div><svg class="a" style="left:23.2px;top:106.50px" width="6" height="5" viewBox="0 0 6 5"><path d="M0.5 0.7L2.4 2.7L4.3 0.7" fill="none" stroke="#6a6e75" stroke-width="1.05"/></svg><div class="ln" style="left:32.3px;top:110.04px"><span class="kw">func</span><span class="d">·</span><span class="fd">_on_ready</span><span class="sy">()</span><span class="d">·</span><span class="sy" style="display:inline-block;width:10.34px;position:relative;letter-spacing:0"><svg style="position:absolute;left:0;top:-4.1px;left:0.4px" width="11" height="8" viewBox="0 0 11 8"><path d="M0.8 3.6H9.6M6.4 0.3L9.6 3.6L6.4 6.9" fill="none" stroke="#abc9ff" stroke-width="0.75"/></svg>&#8203;</span><span class="d">·</span><span class="kw">void</span><span class="d">·</span><span class="sy">:</span></div><div class="num" style="top:122.74px">10</div><div class="ln" style="left:32.3px;top:122.74px"><span class="d">····</span><span class="tx">Flag</span><span class="sy">.</span><span class="fn">hide</span><span class="sy">()</span></div><div class="num" style="top:135.44px">11</div><div class="num" style="top:148.14px">12</div><svg class="a" style="left:23.2px;top:144.60px" width="6" height="5" viewBox="0 0 6 5"><path d="M0.5 0.7L2.4 2.7L4.3 0.7" fill="none" stroke="#6a6e75" stroke-width="1.05"/></svg><div class="ln" style="left:32.3px;top:148.14px"><span class="kw">func</span><span class="d">·</span><span class="fd">get_key</span><span class="sy">()</span><span class="d">·</span><span class="sy" style="display:inline-block;width:10.34px;position:relative;letter-spacing:0"><svg style="position:absolute;left:0;top:-4.1px;left:0.4px" width="11" height="8" viewBox="0 0 11 8"><path d="M0.8 3.6H9.6M6.4 0.3L9.6 3.6L6.4 6.9" fill="none" stroke="#abc9ff" stroke-width="0.75"/></svg>&#8203;</span><span class="d">·</span><span class="ty">String</span><span class="sy">:</span></div><div class="num" style="top:160.84px">13</div><div class="ln" style="left:32.3px;top:160.84px"><span class="d">····</span><span class="cf">return</span><span class="d">·</span><span class="tx">key</span></div><div class="num" style="top:173.54px">14</div><div class="num" style="top:186.24px">15</div><svg class="a" style="left:23.2px;top:182.70px" width="6" height="5" viewBox="0 0 6 5"><path d="M0.5 0.7L2.4 2.7L4.3 0.7" fill="none" stroke="#6a6e75" stroke-width="1.05"/></svg><div class="ln" style="left:32.3px;top:186.24px"><span class="kw">func</span><span class="d">·</span><span class="fd">submit</span><span class="sy">()</span><span class="d">·</span><span class="sy" style="display:inline-block;width:10.34px;position:relative;letter-spacing:0"><svg style="position:absolute;left:0;top:-4.1px;left:0.4px" width="11" height="8" viewBox="0 0 11 8"><path d="M0.8 3.6H9.6M6.4 0.3L9.6 3.6L6.4 6.9" fill="none" stroke="#abc9ff" stroke-width="0.75"/></svg>&#8203;</span><span class="d">·</span><span class="kw">void</span><span class="d">·</span><span class="sy">:</span></div><div class="num" style="top:198.94px">16</div><div class="ln" style="left:32.3px;top:198.94px"><span class="d">····</span><span class="tx">data</span><span class="d">·</span><span class="sy">=</span><span class="d">·</span><span class="tx">flagTextEdit</span><span class="sy">.</span><span class="mv">text</span></div><div class="num" style="top:211.64px">17</div><div class="num" style="top:224.34px">18</div><div class="ln" style="left:32.3px;top:224.34px"><span class="d">····</span><span class="kw">var</span><span class="d">·</span><span class="tx">aes</span><span class="d">·</span><span class="sy">=</span><span class="d">·</span><span class="ty">AESContext</span><span class="sy">.</span><span class="fn">new</span><span class="sy">()</span></div><div class="num" style="top:237.04px">19</div><div class="ln" style="left:32.3px;top:237.04px"><span class="d">····</span><span class="tx">aes</span><span class="sy">.</span><span class="fn">start</span><span class="sy">(</span><span class="ty">AESContext</span><span class="sy">.</span><span class="mv">MODE_ECB_ENCRYPT</span><span class="sy">,</span><span class="d">·</span><span class="tx">key</span><span class="sy">.</span><span class="fn">to_utf8_buffer</span><span class="sy">())</span></div><div class="num" style="top:249.74px">20</div><div class="ln" style="left:32.3px;top:249.74px"><span class="d">····</span><span class="kw">var</span><span class="d">·</span><span class="tx">encrypted</span><span class="d">·</span><span class="sy">=</span><span class="d">·</span><span class="tx">aes</span><span class="sy">.</span><span class="fn">update</span><span class="sy">(</span><span class="tx">data</span><span class="sy">.</span><span class="fn">to_utf8_buffer</span><span class="sy">())</span></div><div class="num" style="top:262.44px">21</div><div class="ln" style="left:32.3px;top:262.44px"><span class="d">····</span><span class="tx">aes</span><span class="sy">.</span><span class="fn">finish</span><span class="sy">()</span></div><div class="num" style="top:275.14px">22</div><div class="num" style="top:287.84px">23</div><svg class="a" style="left:23.2px;top:284.30px" width="6" height="5" viewBox="0 0 6 5"><path d="M0.5 0.7L2.4 2.7L4.3 0.7" fill="none" stroke="#6a6e75" stroke-width="1.05"/></svg><div class="ln" style="left:32.3px;top:287.84px"><span class="d">····</span><span class="cf">if</span><span class="d">·</span><span class="tx">encrypted</span><span class="sy">.</span><span class="fn">hex_encode</span><span class="sy">()</span><span class="d">·</span><span class="sy">==</span><span class="d">·</span><span class="st">&quot;d458af702a680ae4d089ce32fc39945d&quot;</span><span class="sy">:</span></div><div class="num" style="top:300.54px">24</div><div class="ln" style="left:32.3px;top:300.54px"><span class="d">········</span><span class="tx">label2</span><span class="sy">.</span><span class="fn">show</span><span class="sy">()</span></div><div class="num" style="top:313.24px">25</div><svg class="a" style="left:23.2px;top:309.70px" width="6" height="5" viewBox="0 0 6 5"><path d="M0.5 0.7L2.4 2.7L4.3 0.7" fill="none" stroke="#6a6e75" stroke-width="1.05"/></svg><div class="ln" style="left:32.3px;top:313.24px"><span class="d">····</span><span class="cf">else</span><span class="sy">:</span></div><div class="num" style="top:325.94px">26</div><div class="ln" style="left:32.3px;top:325.94px"><span class="d">········</span><span class="tx">label2</span><span class="sy">.</span><span class="fn">hide</span><span class="sy">()</span></div><div class="num" style="top:338.64px">27</div><div class="num" style="top:351.34px">28</div><svg class="a" style="left:23.2px;top:347.80px" width="6" height="5" viewBox="0 0 6 5"><path d="M0.5 0.7L2.4 2.7L4.3 0.7" fill="none" stroke="#6a6e75" stroke-width="1.05"/></svg><div class="ln" style="left:32.3px;top:351.34px"><span class="kw">func</span><span class="d">·</span><span class="fd">back</span><span class="sy">()</span><span class="d">·</span><span class="sy" style="display:inline-block;width:10.34px;position:relative;letter-spacing:0"><svg style="position:absolute;left:0;top:-4.1px;left:0.4px" width="11" height="8" viewBox="0 0 11 8"><path d="M0.8 3.6H9.6M6.4 0.3L9.6 3.6L6.4 6.9" fill="none" stroke="#abc9ff" stroke-width="0.75"/></svg>&#8203;</span><span class="d">·</span><span class="kw">void</span><span class="d">·</span><span class="sy">:</span></div><div class="num" style="top:364.04px">29</div><div class="ln" style="left:32.3px;top:364.04px"><span class="d">····</span><span class="fn">get_tree</span><span class="sy">()</span><span class="sy">.</span><span class="fn">change_scene_to_file</span><span class="sy">(</span><span class="st">"res:<span style="position:relative;left:-1.6px">//</span>scenes/menu.tscn"</span><span class="sy">)</span></div><div class="num" style="top:376.74px">30</div></div></div></body></html>
